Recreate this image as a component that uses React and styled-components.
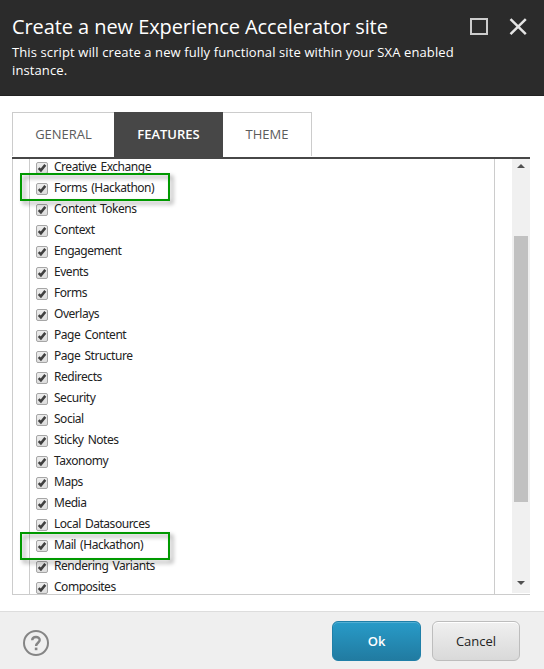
import React from 'react';
import styled, { createGlobalStyle } from 'styled-components';

const Global = createGlobalStyle`
  * { box-sizing: border-box; }
  body { margin: 0; background: #fff; font-family: "Open Sans", sans-serif; }
`;

const Dialog = styled.div`
  display: flex;
  flex-direction: column;
  width: 544px;
  height: 669px;
  overflow: hidden;
  background: #fff;
`;

const Header = styled.header`
  display: flex;
  justify-content: space-between;
  height: 96px;
  padding: 12px 17px 0 12px;
  background: #2b2b2b;
  border-bottom: 1px solid #222;
  color: #fff;
`;

const Title = styled.h1`
  margin: 0;
  font-size: 20px;
  font-weight: 400;
  line-height: 30px;
  letter-spacing: -0.08px;
  white-space: nowrap;
`;

const Subtitle = styled.p`
  width: 455px;
  margin: 1px 0 0;
  font-size: 13px;
  line-height: 18px;
  letter-spacing: 0.11px;
`;

const Heading = styled.div`
  width: 440px;
`;

const WindowButtons = styled.div`
  display: flex;
  gap: 21px;
  padding-top: 6px;
`;

const WindowIcon = styled.svg`
  display: block;
  width: 18px;
  height: 18px;
`;

const Body = styled.main`
  display: flex;
  flex-direction: column;
  height: 515px;
  padding: 16px 14px 0 12px;
`;

const Tabs = styled.nav`
  display: flex;
  height: 47px;
  width: 518px;
  border-bottom: 2px solid #474747;
`;

const Tab = styled.div`
  width: ${(p) => p.$width}px;
  height: ${(p) => (p.$active ? 45 : 44)}px;
  border: solid #ccc;
  border-width: ${(p) => p.$borders || '1px 0 0 0'};
  border-color: ${(p) => (p.$active ? '#474747' : '#ccc')};
  background: ${(p) => (p.$active ? '#474747' : '#fff')};
  color: ${(p) => (p.$active ? '#fff' : '#5c5c5c')};
  font-size: 13px;
  font-weight: ${(p) => (p.$active ? 600 : 400)};
  line-height: 43px;
  text-align: center;
`;

const Panel = styled.section`
  display: flex;
  width: 518px;
  height: 436px;
  border-left: 1px solid #ccc;
  border-bottom: 1px solid #ccc;
`;

const ListFrame = styled.div`
  position: relative;
  width: 466px;
  height: 435px;
  margin: 0 17px 0 16px;
  border: solid #ccc;
  border-width: 0 1px;
`;

const List = styled.ul`
  height: 435px;
  margin: 0;
  padding: 0 0 0 6px;
  overflow: hidden;
  list-style: none;
`;

const Row = styled.li`
  display: flex;
  gap: 6px;
  height: 21px;
  &:first-child { margin-top: -3px; }
`;

const Check = styled.svg`
  display: block;
  flex: none;
  width: 12px;
  height: 13px;
  margin-top: 6px;
`;

const Label = styled.span`
  font-family: "Noto Sans", sans-serif;
  font-size: 12px;
  line-height: 21px;
  letter-spacing: -0.47px;
  word-spacing: 1.5px;
  color: #222;
  white-space: nowrap;
`;

const Highlight = styled.div`
  position: absolute;
  left: -10px;
  top: ${(p) => p.$top}px;
  width: 150px;
  height: 28px;
  border: 2px solid #090;
  filter: drop-shadow(3px 3px 2px rgba(0, 0, 0, 0.4));
`;

const ScrollBar = styled.div`
  display: flex;
  flex-direction: column;
  align-items: center;
  width: 18px;
  height: 434px;
  background: #f0f0f0;
`;

const Arrow = styled.svg`
  display: block;
  width: 8px;
  height: 4px;
  margin: ${(p) => p.$margin};
`;

const Thumb = styled.div`
  width: 14px;
  height: 266px;
  background: #c1c1c1;
`;

const Footer = styled.footer`
  display: flex;
  align-items: center;
  gap: 11px;
  height: 58px;
  padding: 1px 24px 0 23px;
  background: #efefef;
  border-top: 1px solid #ddd;
`;

const Help = styled.svg`
  width: 26px;
  height: 26px;
  margin: 4px auto 0 0;
`;

const Button = styled.button`
  width: ${(p) => (p.$primary ? 89 : 88)}px;
  height: 40px;
  padding: 0;
  border: 1px solid ${(p) => (p.$primary ? '#1f7fa8' : '#bdbdbd')};
  border-radius: 6px;
  background: ${(p) => (p.$primary ? 'linear-gradient(#289bc8, #217ba1)' : 'linear-gradient(#f0f0f0, #d9d9d9)')};
  box-shadow: inset 0 1px ${(p) => (p.$primary ? '#53afd3' : '#fff')};
  color: ${(p) => (p.$primary ? '#fff' : '#222')};
  font: ${(p) => (p.$primary ? 600 : 400)} 13px "Open Sans", sans-serif;
`;

const features = [
  'Creative Exchange', 'Forms (Hackathon)', 'Content Tokens', 'Context', 'Engagement',
  'Events', 'Forms', 'Overlays', 'Page Content', 'Page Structure', 'Redirects', 'Security',
  'Social', 'Sticky Notes', 'Taxonomy', 'Maps', 'Media', 'Local Datasources',
  'Mail (Hackathon)', 'Rendering Variants', 'Composites',
];

function CheckBox() {
  return (
    <Check viewBox="0 0 12 13">
      <defs>
        <linearGradient id="box" x1="0" y1="0" x2="0" y2="1">
          <stop offset="0" stopColor="#eee" />
          <stop offset="1" stopColor="#dcdcdc" />
        </linearGradient>
      </defs>
      <rect x=".5" y=".5" width="11" height="11" rx="1.5" fill="url(#box)" stroke="#a6a6a6" />
      <path d="M2.7 6.1 4.9 8.3 9.3 2.9" fill="none" stroke="#404040" strokeWidth="2.5" />
    </Check>
  );
}

export default function App() {
  return (
    <Dialog>
      <Global />
      <Header>
        <Heading>
          <Title>Create a new Experience Accelerator site</Title>
          <Subtitle>This script will create a new fully functional site within your SXA enabled instance.</Subtitle>
        </Heading>
        <WindowButtons>
          <WindowIcon viewBox="0 0 18 18">
            <rect x="1" y="1" width="16" height="15" fill="none" stroke="#ccc" strokeWidth="2" />
          </WindowIcon>
          <WindowIcon viewBox="0 0 18 18">
            <path d="M1.5 1.2 16.8 16.2M16.8 1.2 1.5 16.2" fill="none" stroke="#e4e4e4" strokeWidth="2.5" />
          </WindowIcon>
        </WindowButtons>
      </Header>
      <Body>
        <Tabs>
          <Tab $width={102} $borders="1px 0 0 1px">GENERAL</Tab>
          <Tab $width={109} $active>FEATURES</Tab>
          <Tab $width={89} $borders="1px 1px 0 0">THEME</Tab>
        </Tabs>
        <Panel>
          <ListFrame>
            <List>
              {features.map((name) => (
                <Row key={name}>
                  <CheckBox />
                  <Label>{name}</Label>
                </Row>
              ))}
            </List>
            <Highlight $top={14} />
            <Highlight $top={373} />
          </ListFrame>
          <ScrollBar>
            <Arrow $margin="5px 0 68px" viewBox="0 0 8 4"><path d="M0 4 4 0 8 4Z" fill="#505050" /></Arrow>
            <Thumb />
            <Arrow $margin="79px 0 0" viewBox="0 0 8 4"><path d="M0 0H8L4 4Z" fill="#505050" /></Arrow>
          </ScrollBar>
        </Panel>
      </Body>
      <Footer>
        <Help viewBox="0 0 26 26">
          <circle cx="13" cy="13" r="12" fill="none" stroke="#858585" strokeWidth="2" />
          <path d="M9.2 10.2C9.3 5.9 16.7 5.9 16.7 10c0 2.7-3.6 2.8-3.6 6" fill="none" stroke="#858585" strokeWidth="2.4" />
          <rect x="11.8" y="17.6" width="2.6" height="2.6" fill="#858585" />
        </Help>
        <Button $primary>Ok</Button>
        <Button>Cancel</Button>
      </Footer>
    </Dialog>
  );
}
